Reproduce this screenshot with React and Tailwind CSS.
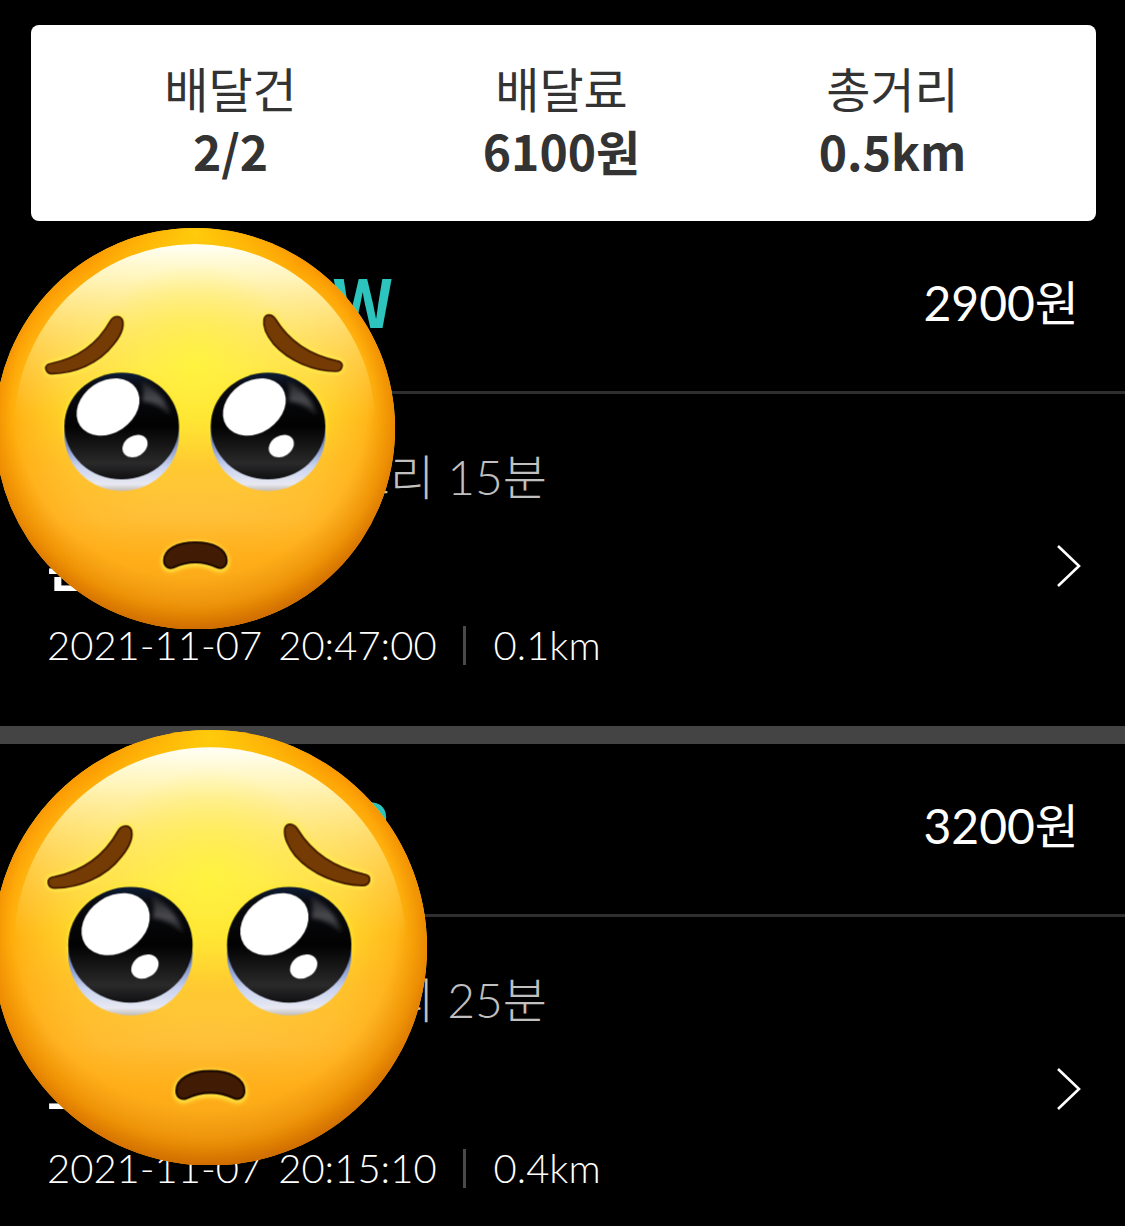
import React from "react";

const summary = [
  { label: "배달건", value: "2/2" },
  { label: "배달료", value: "6100원" },
  { label: "총거리", value: "0.5km" },
];

const deliveries = [
  {
    code: "W",
    codeWidth: "w-[346px]",
    fee: "2900원",
    cook: "조리 15분",
    store: "본",
    date: "2021-11-07",
    time: "20:47:00",
    distance: "0.1km",
    bottom: "pb-[50px]",
    sticker: "-left-[5px] top-[7px] w-[400px]",
  },
  {
    code: "P",
    codeWidth: "w-[342px]",
    fee: "3200원",
    cook: "조리 25분",
    store: "고",
    date: "2021-11-07",
    time: "20:15:10",
    distance: "0.4km",
    bottom: "pb-6",
    sticker: "-left-[7px] -top-[14px] w-[434px]",
  },
];

function Eye({ x, id }) {
  return (
    <g transform={`translate(${x} 618)`}>
      <ellipse cx="0" cy="0" rx="177" ry="164" fill="#ffee2e" opacity="0.7" filter={`url(#${id}-soft)`} />
      <ellipse cx="0" cy="25" rx="172" ry="170" fill={`url(#${id}-white)`} />
      <ellipse cx="0" cy="0" rx="172" ry="160" fill={`url(#${id}-eye)`} />
      <path
        d="M58 -136 C105 -112 138 -72 146 -30 C122 -58 90 -72 62 -74 C66 -98 66 -118 58 -136Z"
        fill={`url(#${id}-sheen)`}
        filter={`url(#${id}-soft)`}
      />
      <ellipse cx="-41" cy="-57" rx="101" ry="78" transform="rotate(-34 -41 -57)" fill="#fff" />
      <ellipse cx="40" cy="60" rx="40" ry="31" transform="rotate(-32 40 60)" fill="#fff" />
    </g>
  );
}

function PleadingFace({ id, className }) {
  const leftBrow =
    "M137 448 C134 438 142 431 154 430 C232 414 292 371 330 303 C340 286 361 285 367 302 C372 325 357 352 339 374 C295 432 220 461 155 461 C145 461 139 456 137 448Z";
  const rightBrow =
    "M1025 440 C1028 430 1020 424 1008 422 C930 405 868 366 826 298 C815 281 796 280 791 297 C787 320 802 350 820 372 C866 424 940 453 1006 454 C1017 454 1023 449 1025 440Z";
  const mouth =
    "M491 1022 C491 988 530 967 585 967 C640 967 679 988 679 1022 C679 1040 664 1048 650 1042 C606 1022 564 1022 520 1042 C506 1048 491 1040 491 1022Z";
  return (
    <svg viewBox="-16 24 1200 1204" className={className} role="img" aria-label="Pleading face">
      <defs>
        <linearGradient id={`${id}-base`} x1="0" y1="24" x2="0" y2="1228" gradientUnits="userSpaceOnUse">
          <stop offset="0" stopColor="#ffc20a" />
          <stop offset="0.05" stopColor="#ffd010" />
          <stop offset="0.2" stopColor="#ffe23a" />
          <stop offset="0.34" stopColor="#fff238" />
          <stop offset="0.45" stopColor="#ffe52c" />
          <stop offset="0.58" stopColor="#ffca30" />
          <stop offset="0.72" stopColor="#ffc23c" />
          <stop offset="0.82" stopColor="#ffad18" />
          <stop offset="0.92" stopColor="#f6a016" />
          <stop offset="1" stopColor="#ec9410" />
        </linearGradient>
        <radialGradient id={`${id}-side`} cx="584" cy="626" r="602" gradientUnits="userSpaceOnUse">
          <stop offset="0.35" stopColor="#ffb31f" stopOpacity="0" />
          <stop offset="0.65" stopColor="#ffb31f" stopOpacity="0.35" />
          <stop offset="0.85" stopColor="#ffab14" stopOpacity="0.75" />
          <stop offset="0.92" stopColor="#ffa404" stopOpacity="0.85" />
          <stop offset="1" stopColor="#fb9500" stopOpacity="0.95" />
        </radialGradient>
        <radialGradient id={`${id}-rim`} cx="570" cy="540" r="700" gradientUnits="userSpaceOnUse">
          <stop offset="0.76" stopColor="#c86800" stopOpacity="0" />
          <stop offset="0.88" stopColor="#c86800" stopOpacity="0.3" />
          <stop offset="1" stopColor="#bd5c00" stopOpacity="0.8" />
        </radialGradient>
        <radialGradient id={`${id}-crown`} cx="584" cy="40" r="330" gradientUnits="userSpaceOnUse">
          <stop offset="0" stopColor="#ffd00c" stopOpacity="0.9" />
          <stop offset="1" stopColor="#ffc60a" stopOpacity="0" />
        </radialGradient>
        <linearGradient id={`${id}-glow`} x1="0" y1="72" x2="0" y2="600" gradientUnits="userSpaceOnUse">
          <stop offset="0" stopColor="#fffff6" stopOpacity="1" />
          <stop offset="0.2" stopColor="#fffbcb" stopOpacity="0.9" />
          <stop offset="0.42" stopColor="#fff4a0" stopOpacity="0.7" />
          <stop offset="0.62" stopColor="#ffe880" stopOpacity="0.5" />
          <stop offset="0.85" stopColor="#ffd660" stopOpacity="0.25" />
          <stop offset="1" stopColor="#ffd040" stopOpacity="0" />
        </linearGradient>
        <radialGradient id={`${id}-warm`} cx="584" cy="440" r="310" gradientUnits="userSpaceOnUse">
          <stop offset="0" stopColor="#fff43a" stopOpacity="0.8" />
          <stop offset="0.5" stopColor="#fff040" stopOpacity="0.4" />
          <stop offset="1" stopColor="#ffe63c" stopOpacity="0" />
        </radialGradient>
        <linearGradient id={`${id}-white`} x1="0" y1="0" x2="0" y2="1">
          <stop offset="0.5" stopColor="#5972b8" />
          <stop offset="0.78" stopColor="#c9d3f0" />
          <stop offset="0.94" stopColor="#e8e9f2" />
          <stop offset="1" stopColor="#c3bcb4" />
        </linearGradient>
        <linearGradient id={`${id}-eye`} x1="0" y1="0" x2="0" y2="1">
          <stop offset="0" stopColor="#0d1c35" />
          <stop offset="0.12" stopColor="#0b0c12" />
          <stop offset="0.5" stopColor="#020202" />
          <stop offset="0.85" stopColor="#2a2a2b" />
          <stop offset="1" stopColor="#101012" />
        </linearGradient>
        <linearGradient id={`${id}-sheen`} x1="0" y1="0" x2="0" y2="1">
          <stop offset="0" stopColor="#1c1d22" />
          <stop offset="0.55" stopColor="#4a4b50" />
          <stop offset="1" stopColor="#1a1a1a" />
        </linearGradient>
        <filter id={`${id}-soft`} x="-20%" y="-20%" width="140%" height="140%">
          <feGaussianBlur stdDeviation="6" />
        </filter>
      </defs>
      <ellipse cx="584" cy="626" rx="600" ry="602" fill={`url(#${id}-base)`} />
      <ellipse cx="584" cy="626" rx="600" ry="602" fill={`url(#${id}-side)`} />
      <ellipse cx="584" cy="626" rx="600" ry="602" fill={`url(#${id}-rim)`} />
      <ellipse cx="584" cy="626" rx="600" ry="602" fill={`url(#${id}-crown)`} />
      <ellipse cx="584" cy="618" rx="541" ry="546" fill={`url(#${id}-glow)`} />
      <circle cx="584" cy="440" r="310" fill={`url(#${id}-warm)`} />
      <g fill="none" stroke="#fff04a" strokeWidth="14" filter={`url(#${id}-soft)`}>
        <path d={leftBrow} />
        <path d={rightBrow} />
        <path d={mouth} transform="translate(0 4)" />
      </g>
      <g fill="#743b05" stroke="#421800" strokeWidth="5">
        <path d={leftBrow} />
        <path d={rightBrow} />
      </g>
      <path d={mouth} fill="#421b05" stroke="#1d0900" strokeWidth="6" />
      <Eye x={364} id={id} />
      <Eye x={803} id={id} />
    </svg>
  );
}

function Delivery({ item, index }) {
  return (
    <article className="relative">
      <header className="flex h-[170px] items-center justify-between pr-[46px] pb-[6px] pl-[47px]">
        <h2
          className={`${item.codeWidth} pb-2 text-right font-['Noto_Sans_CJK_KR',sans-serif] text-[66px] leading-[72px] font-bold text-[#2ec4be]`}
        >
          {item.code}
        </h2>
        <p className="text-[48px] leading-[62px]">{item.fee}</p>
      </header>
      <div
        className={`${item.bottom} flex items-center justify-between border-t-[3px] border-[#2f2f2f] pt-[52px] pr-11 pl-[47px]`}
      >
        <div className="font-light">
          <p className="w-[500px] text-right text-[48px] leading-[62px] text-[#c0c0c0]">{item.cook}</p>
          <h3 className="mt-[26px] font-['Noto_Sans_CJK_KR',sans-serif] text-[52px] leading-[62px] font-bold">{item.store}</h3>
          <p className="mt-[18px] flex items-center text-[40px] leading-[62px]">
            <time className="flex gap-4">
              <span>{item.date}</span>
              <span>{item.time}</span>
            </time>
            <span className="mr-7 ml-[26px] h-[39px] w-[3px] bg-[#4a4a4a]" />
            <span>{item.distance}</span>
          </p>
        </div>
        <button type="button" aria-label={`${item.fee} 상세 보기`} className="pt-2.5">
          <svg viewBox="0 0 24 42" className="w-6" fill="none" stroke="#fff" strokeWidth="2.6">
            <path d="M1 1 L22 21 L1 41" />
          </svg>
        </button>
      </div>
      <PleadingFace id={`face${index}`} className={`absolute z-10 max-w-none ${item.sticker}`} />
    </article>
  );
}

export default function App() {
  return (
    <main className="min-h-screen overflow-x-clip bg-black pt-[25px] font-[Lato,'Noto_Sans_CJK_KR',sans-serif] text-white">
      <dl className="mr-[29px] ml-[31px] grid grid-cols-3 rounded-lg bg-white pt-[34px] pr-[38px] pb-[42px] pl-[34px] text-center text-[48px] text-[#333]">
        {summary.map((s) => (
          <div key={s.label}>
            <dt className="leading-[62px]">{s.label}</dt>
            <dd className="font-['Noto_Sans_CJK_KR',sans-serif] leading-[58px] font-bold">{s.value}</dd>
          </div>
        ))}
      </dl>
      <Delivery item={deliveries[0]} index={0} />
      <hr className="h-[18px] border-0 bg-[#444]" />
      <Delivery item={deliveries[1]} index={1} />
    </main>
  );
}
